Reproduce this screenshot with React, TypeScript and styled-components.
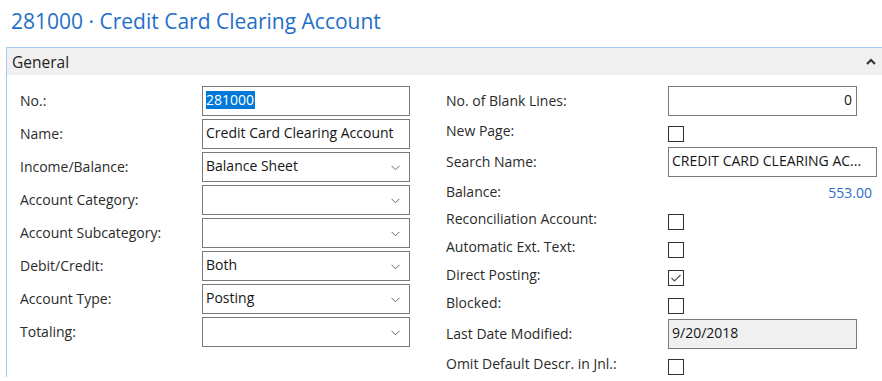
import React from 'react';
import styled, { createGlobalStyle } from 'styled-components';

const GlobalStyle = createGlobalStyle`
  html, body {
    margin: 0;
    padding: 0;
    background: #ffffff;
  }
  body {
    font-family: 'Open Sans', 'Noto Sans', 'Liberation Sans', sans-serif;
    overflow: hidden;
  }
`;

const Page = styled('div')`
  width: 882px;
  height: 381px;
  overflow: hidden;
`;

const Title = styled('h1')`
  margin: 0 0 11px 0;
  padding: 6px 0 0 11px;
  font-size: 21px;
  font-weight: 400;
  line-height: 30px;
  color: #1f6fc8;
  white-space: nowrap;
`;

const Panel = styled('section')`
  margin-left: 6px;
  border-top: 1px solid #a6c8f2;
  border-left: 1px solid #a6c8f2;
`;

const PanelHeader = styled('div')`
  display: flex;
  align-items: center;
  justify-content: space-between;
  height: 27px;
  padding: 0 6px 0 5px;
  background: #f0f0f0;
  font-size: 15.5px;
  color: #222222;
`;

const Body = styled('div')`
  display: grid;
  grid-template-columns: 390px 430px;
  column-gap: 36px;
  padding: 11px 0 0 13px;
`;

const Column = styled('div')`
  display: flex;
  flex-direction: column;
  gap: 3px;
`;

const Row = styled('div')<{ $height: number; $labelWidth: number }>`
  display: grid;
  grid-template-columns: ${(p) => p.$labelWidth}px auto;
  align-items: center;
  height: ${(p) => p.$height}px;
`;

const Label = styled('span')`
  margin-top: -2px;
  font-size: 14px;
  color: #2b2b2b;
  white-space: nowrap;
`;

const Field = styled('div')<{ $width: number; $align?: 'left' | 'right'; $readOnly?: boolean }>`
  position: relative;
  box-sizing: border-box;
  display: flex;
  align-items: center;
  justify-content: ${(p) => (p.$align === 'right' ? 'flex-end' : 'flex-start')};
  width: ${(p) => p.$width}px;
  height: 30px;
  padding: 0 ${(p) => (p.$align === 'right' ? '4px' : '3px')} 3px;
  border: 1px solid #7a7a7a;
  background: ${(p) => (p.$readOnly ? '#f0f0f0' : '#ffffff')};
  font-size: 14px;
  color: #151515;
  white-space: nowrap;
  overflow: hidden;
`;

const Selected = styled('span')`
  background: #0078d7;
  color: #ffffff;
  line-height: 18px;
  padding-right: 1px;
`;

const ArrowBox = styled('span')`
  position: absolute;
  right: 9px;
  top: 12px;
  display: flex;
`;

const Check = styled('span')`
  box-sizing: border-box;
  display: flex;
  align-items: center;
  justify-content: center;
  align-self: start;
  margin-top: 7px;
  width: 16px;
  height: 16px;
  border: 1px solid #333333;
  background: #ffffff;
`;

const Amount = styled('span')`
  width: 204px;
  text-align: right;
  font-size: 14px;
  color: #2e6cc7;
`;

const Caret = () => (
  <svg width="10" height="7" viewBox="0 0 10 7">
    <path d="M1 6 L5 2 L9 6" fill="none" stroke="#333" strokeWidth="2" />
  </svg>
);

const Arrow = () => (
  <ArrowBox>
    <svg width="9" height="6" viewBox="0 0 9 6">
      <path d="M0.5 0.8 L4.5 4.8 L8.5 0.8" fill="none" stroke="#666" strokeWidth="1" />
    </svg>
  </ArrowBox>
);

const CheckBox: React.FC<{ checked?: boolean }> = ({ checked }) => (
  <Check>
    {checked && (
      <svg width="12" height="10" viewBox="0 0 12 10">
        <path d="M1.5 5 L4.5 8 L10.5 2" fill="none" stroke="#555" strokeWidth="1.2" />
      </svg>
    )}
  </Check>
);

type LeftField = { label: string; value?: string; select?: boolean; selected?: boolean };

const leftFields: LeftField[] = [
  { label: 'No.:', value: '281000', selected: true },
  { label: 'Name:', value: 'Credit Card Clearing Account' },
  { label: 'Income/Balance:', value: 'Balance Sheet', select: true },
  { label: 'Account Category:', select: true },
  { label: 'Account Subcategory:', select: true },
  { label: 'Debit/Credit:', value: 'Both', select: true },
  { label: 'Account Type:', value: 'Posting', select: true },
  { label: 'Totaling:', select: true },
];

const LEFT_LABEL = 182;
const RIGHT_LABEL = 222;

export default function App() {
  return (
    <Page>
      <GlobalStyle />
      <Title>281000 · Credit Card Clearing Account</Title>
      <Panel>
        <PanelHeader>
          <span>General</span>
          <Caret />
        </PanelHeader>
        <Body>
          <Column>
            {leftFields.map((f) => (
              <Row key={f.label} $height={30} $labelWidth={LEFT_LABEL}>
                <Label>{f.label}</Label>
                <Field $width={208}>
                  {f.selected ? <Selected>{f.value}</Selected> : f.value}
                  {f.select && <Arrow />}
                </Field>
              </Row>
            ))}
          </Column>
          <Column>
            <Row $height={30} $labelWidth={RIGHT_LABEL}>
              <Label>No. of Blank Lines:</Label>
              <Field $width={189} $align="right">0</Field>
            </Row>
            <Row $height={25} $labelWidth={RIGHT_LABEL}>
              <Label>New Page:</Label>
              <CheckBox />
            </Row>
            <Row $height={30} $labelWidth={RIGHT_LABEL}>
              <Label>Search Name:</Label>
              <Field $width={209}>CREDIT CARD CLEARING AC...</Field>
            </Row>
            <Row $height={24} $labelWidth={RIGHT_LABEL}>
              <Label>Balance:</Label>
              <Amount>553.00</Amount>
            </Row>
            <Row $height={25} $labelWidth={RIGHT_LABEL}>
              <Label>Reconciliation Account:</Label>
              <CheckBox />
            </Row>
            <Row $height={25} $labelWidth={RIGHT_LABEL}>
              <Label>Automatic Ext. Text:</Label>
              <CheckBox />
            </Row>
            <Row $height={25} $labelWidth={RIGHT_LABEL}>
              <Label>Direct Posting:</Label>
              <CheckBox checked />
            </Row>
            <Row $height={25} $labelWidth={RIGHT_LABEL}>
              <Label>Blocked:</Label>
              <CheckBox />
            </Row>
            <Row $height={30} $labelWidth={RIGHT_LABEL}>
              <Label>Last Date Modified:</Label>
              <Field $width={189} $readOnly>9/20/2018</Field>
            </Row>
            <Row $height={25} $labelWidth={RIGHT_LABEL}>
              <Label>Omit Default Descr. in Jnl.:</Label>
              <CheckBox />
            </Row>
          </Column>
        </Body>
      </Panel>
    </Page>
  );
}
